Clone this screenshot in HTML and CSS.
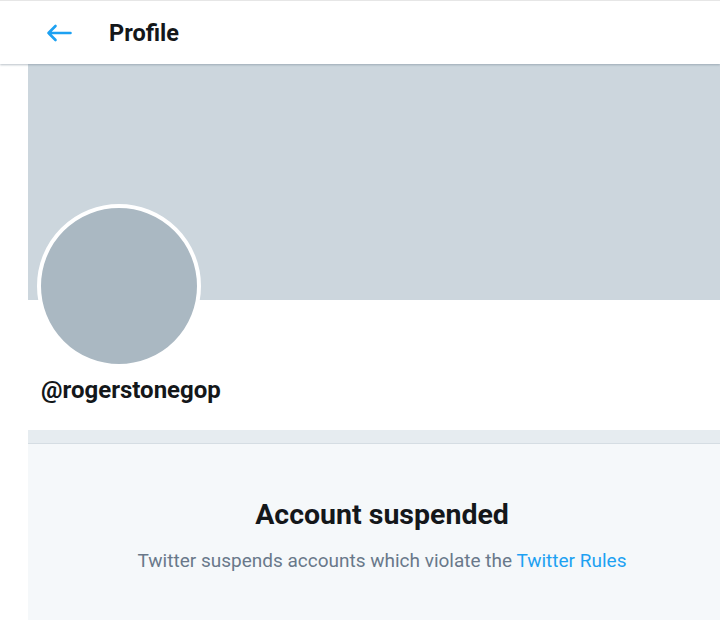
FILE: index.html
```html
<!DOCTYPE html>
<html>
<head>
<meta charset="utf-8">
<link rel="stylesheet" href="styles.css">
</head>
<body>
<div class="page">
  <header class="topbar">
    <span class="back">
      <svg viewBox="0 0 26 18" width="26" height="18"><path d="M24.5 9H2.5M9.5 2L2.5 9l7 7" fill="none" stroke="#1da1f2" stroke-width="2.6" stroke-linecap="round" stroke-linejoin="round"/></svg>
    </span>
    <h1 class="title">Profile</h1>
  </header>
  <main class="column">
    <div class="banner"></div>
    <section class="info">
      <div class="avatar"></div>
      <div class="handle">@rogerstonegop</div>
    </section>
    <div class="band"></div>
    <section class="suspended">
      <h2 class="s-title">Account suspended</h2>
      <p class="s-text">Twitter suspends accounts which violate the <a class="link">Twitter Rules</a></p>
    </section>
  </main>
</div>
</body>
</html>
```
FILE: styles.css
```css
html, body {
  margin: 0;
  padding: 0;
  background: #fff;
  overflow: hidden;
  font-family: Roboto, "Liberation Sans", sans-serif;
}
.page {
  width: 720px;
  height: 622px;
  overflow: hidden;
  border-top: 1px solid #e6e6e6;
  box-sizing: border-box;
}
.topbar {
  height: 63px;
  display: flex;
  align-items: center;
  background: #fff;
  box-shadow: 0 1px 2px rgba(101,119,134,0.45);
  position: relative;
  z-index: 2;
}
.back {
  width: 26px;
  height: 18px;
  margin-left: 46px;
  display: flex;
}
.title {
  margin: 0 0 0 37px;
  font-size: 23.5px;
  font-weight: 700;
  color: #14171a;
}
.column {
  margin-left: 28px;
  width: 708px;
}
.banner {
  height: 236px;
  background: #ccd6dd;
}
.info {
  position: relative;
  height: 130px;
  background: #fff;
}
.avatar {
  position: absolute;
  left: 9px;
  top: -96px;
  width: 156px;
  height: 156px;
  border: 4px solid #fff;
  border-radius: 50%;
  background: #aab8c2;
}
.handle {
  position: absolute;
  left: 13px;
  top: 76px;
  font-size: 24px;
  line-height: 28px;
  font-weight: 700;
  color: #14171a;
}
.band {
  height: 13px;
  background: #e6ecf0;
  border-bottom: 1px solid #d5dde3;
}
.suspended {
  height: 176px;
  background: #f5f8fa;
  text-align: center;
  padding-top: 54px;
  box-sizing: border-box;
}
.s-title {
  margin: 0;
  font-size: 28.5px;
  font-weight: 700;
  color: #14171a;
  line-height: 34px;
}
.s-text {
  margin: 17px 0 0;
  font-size: 19px;
  color: #69788a;
  line-height: 24px;
}
.link {
  color: #1da1f2;
  text-decoration: none;
}
```
